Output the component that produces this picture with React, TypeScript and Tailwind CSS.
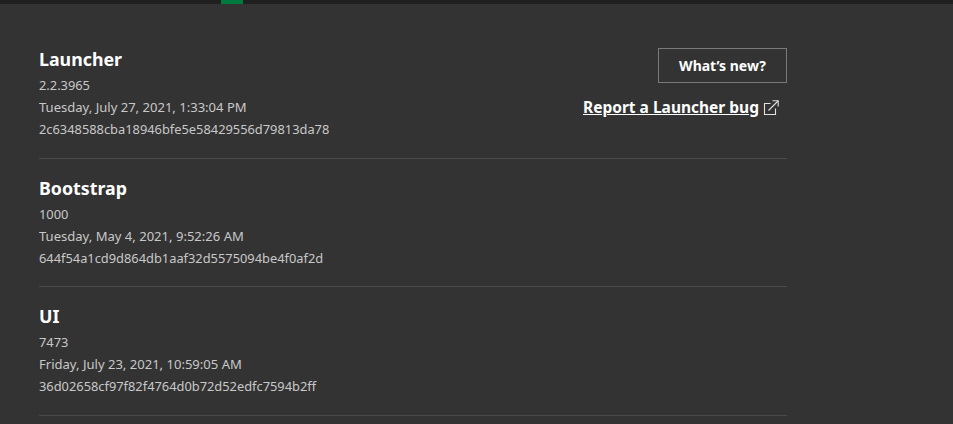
const sections = [
  { title: "Launcher", version: "2.2.3965", date: "Tuesday, July 27, 2021, 1:33:04 PM", hash: "2c6348588cba18946bfe5e58429556d79813da78" },
  { title: "Bootstrap", version: "1000", date: "Tuesday, May 4, 2021, 9:52:26 AM", hash: "644f54a1cd9d864db1aaf32d5575094be4f0af2d" },
  { title: "UI", version: "7473", date: "Friday, July 23, 2021, 10:59:05 AM", hash: "36d02658cf97f82f4764d0b72d52edfc7594b2ff" },
];

function ExternalIcon() {
  return (
    <svg width="16" height="16" viewBox="0 0 16 16" fill="none" stroke="#e0e0e0" strokeWidth="1.1" className="shrink-0">
      <path d="M7.5 3.5H1.5V14.5H12.5V8.5" />
      <path d="M5.5 10.5L15 1" />
      <path d="M9.5 0.8H15.2V6.5" />
    </svg>
  );
}

export default function App() {
  return (
    <div className="w-[953px] h-[424px] overflow-hidden bg-[#333333] font-['Noto_Sans','Open_Sans',sans-serif]">
      <div className="h-1 bg-[#202020] pl-[221px]">
        <div className="h-1 w-[22px] bg-[#007a3d]" />
      </div>
      <div className="w-[748px] ml-[39px] pt-[26px]">
        {sections.map((s, i) => (
          <div key={s.title} className="flex justify-between border-b border-[#4a4a4a] h-[128.5px]">
            <div>
              <div className="text-[17.8px] leading-[58px] h-[44px] font-bold text-white">{s.title}</div>
              <div className="leading-[22px] text-[#c8c8c8]">
                <div className="text-[12.85px]">{s.version}</div>
                <div className="text-[13.05px]">{s.date}</div>
                <div className="text-[12.85px]">{s.hash}</div>
              </div>
            </div>
            {i === 0 && (
              <div className="flex flex-col items-end pt-[18px]">
                <button className="w-[129px] h-[35px] border border-[#7a7a7a] text-[14px] font-bold text-white">What’s new?</button>
                <a className="mt-[13px] mr-[8px] flex items-center gap-[4px] text-[15.5px] font-bold text-white">
                  <span className="underline">Report a Launcher bug</span>
                  <ExternalIcon />
                </a>
              </div>
            )}
          </div>
        ))}
      </div>
    </div>
  );
}
